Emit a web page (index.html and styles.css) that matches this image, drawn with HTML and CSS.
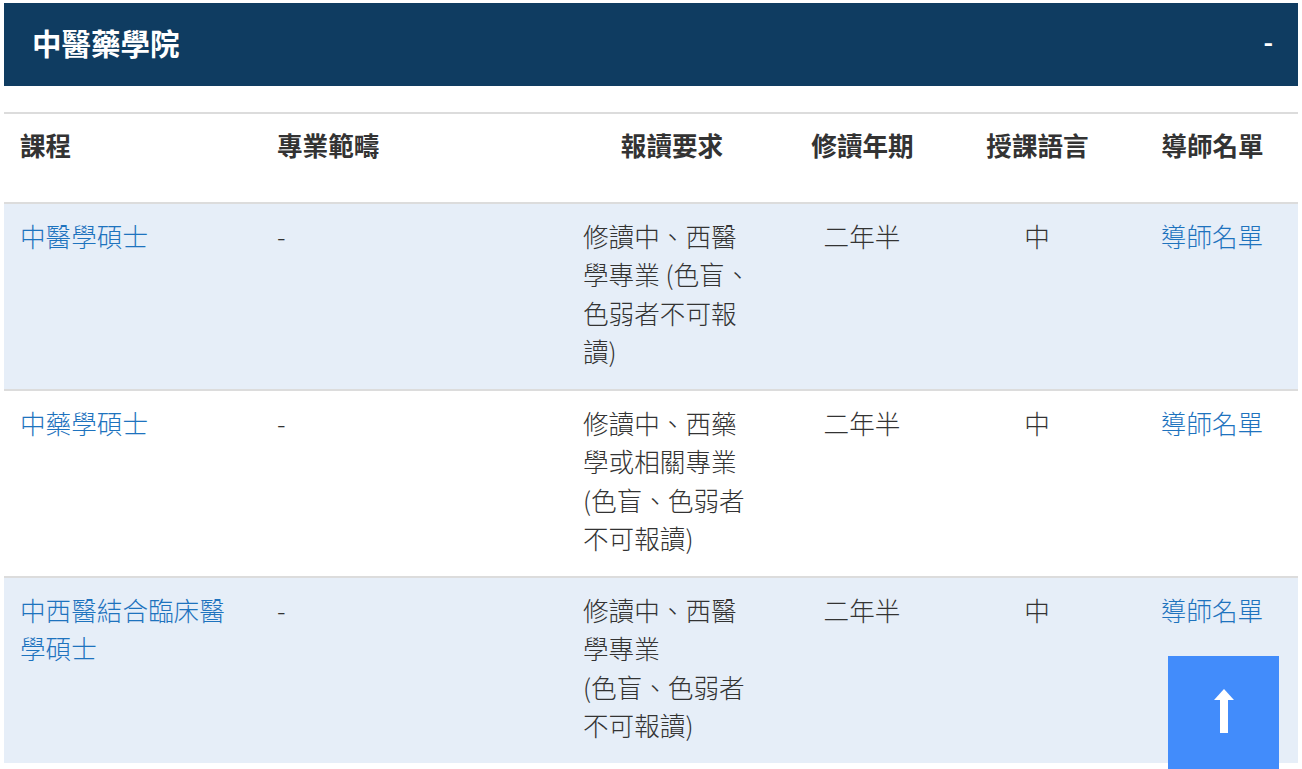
FILE: index.html
```html
<!DOCTYPE html>
<html lang="zh-Hant">
<head>
<meta charset="utf-8">
<title>中醫藥學院</title>
<link rel="stylesheet" href="styles.css">
</head>
<body>
<div class="page">
  <div class="faculty-bar">
    <h2 class="faculty-title">中醫藥學院</h2>
    <span class="toggle">-</span>
  </div>
  <table class="courses">
    <colgroup>
      <col class="c1"><col class="c2"><col class="c3"><col class="c4"><col class="c5"><col class="c6">
    </colgroup>
    <thead>
      <tr>
        <th class="left">課程</th>
        <th class="left">專業範疇</th>
        <th>報讀要求</th>
        <th>修讀年期</th>
        <th>授課語言</th>
        <th>導師名單</th>
      </tr>
    </thead>
    <tbody>
      <tr class="alt">
        <td><a href="#">中醫學碩士</a></td>
        <td>-</td>
        <td>修讀中、西醫學專業 (色盲、色弱者不可報讀)</td>
        <td class="center">二年半</td>
        <td class="center">中</td>
        <td class="center"><a href="#">導師名單</a></td>
      </tr>
      <tr>
        <td><a href="#">中藥學碩士</a></td>
        <td>-</td>
        <td>修讀中、西藥學或相關專業 (色盲、色弱者不可報讀)</td>
        <td class="center">二年半</td>
        <td class="center">中</td>
        <td class="center"><a href="#">導師名單</a></td>
      </tr>
      <tr class="alt">
        <td><a href="#">中西醫結合臨床醫學碩士</a></td>
        <td>-</td>
        <td>修讀中、西醫學專業<br>(色盲、色弱者不可報讀)</td>
        <td class="center">二年半</td>
        <td class="center">中</td>
        <td class="center"><a href="#">導師名單</a></td>
      </tr>
    </tbody>
  </table>
</div>
<a class="to-top" href="#" aria-label="回到頂部">
  <svg width="20" height="46" viewBox="0 0 20 46" aria-hidden="true">
    <polygon points="10,0 20,11 0,11" fill="#fff"/>
    <rect x="6" y="10" width="8" height="34" fill="#fff"/>
  </svg>
</a>
</body>
</html>
```

FILE: styles.css
```css
html, body {
  margin: 0;
  padding: 0;
  background: #fff;
}
body {
  font-family: "Noto Sans CJK TC", "Noto Sans", "Liberation Sans", sans-serif;
  color: #333;
}
.page {
  padding: 3px 4px 0 4px;
}
.faculty-bar {
  background: #0f3c61;
  height: 83px;
  display: flex;
  align-items: center;
  justify-content: space-between;
  padding: 0 25px 4px 28px;
  box-sizing: border-box;
  color: #fff;
}
.faculty-title {
  margin: 0;
  font-size: 29.5px;
  font-weight: 700;
  line-height: 1;
}
.toggle {
  font-size: 26px;
  font-weight: 700;
  line-height: 1;
  margin-top: -4px;
}
.courses {
  margin-top: 26px;
  width: 1294px;
  border-collapse: collapse;
  table-layout: fixed;
  font-size: 25.6px;
  line-height: 38.4px;
}
.c1 { width: 257px; }
.c2 { width: 306px; }
.c3 { width: 210px; }
.c4 { width: 171px; }
.c5 { width: 179px; }
.c6 { width: 171px; }
.courses thead tr {
  border-top: 2px solid #dcdcdc;
  border-bottom: 2px solid #dcdcdc;
}
.courses th {
  font-weight: 700;
  text-align: center;
  vertical-align: top;
  padding: 12px 16px 37px 16px;
  height: 39px;
  color: #333;
}
.courses th.left {
  text-align: left;
}
.courses tbody tr {
  border-bottom: 2px solid #dcdcdc;
}
.courses tbody tr:last-child {
  border-bottom: none;
}
.courses tr.alt {
  background: #e6eef8;
}
.courses td {
  vertical-align: top;
  padding: 13px 17px 18px 16px;
  height: 154px;
  font-weight: 300;
}
.courses td.center {
  text-align: center;
}
.courses a {
  color: #1e73be;
  text-decoration: none;
}
.to-top {
  position: fixed;
  right: 23px;
  bottom: 0;
  width: 111px;
  height: 113px;
  background: #428cfb;
  display: flex;
  align-items: flex-start;
  justify-content: center;
  padding-top: 33px;
  box-sizing: border-box;
}
.to-top svg {
  display: block;
}
```
